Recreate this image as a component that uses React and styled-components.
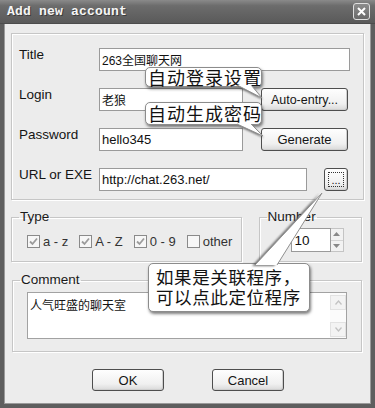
import React from 'react';
import styled, { createGlobalStyle } from 'styled-components';

const GlobalStyle = createGlobalStyle`
  html, body {
    margin: 0;
    padding: 0;
    background: #ececec;
  }
  body {
    font-family: 'Liberation Sans', Arial, 'Noto Sans CJK SC', sans-serif;
    color: #141414;
  }
`;

const Window = styled.div`
  position: relative;
  width: 375px;
  height: 408px;
  display: flex;
  flex-direction: column;
  overflow: hidden;
  background: #ececec;
`;

const TitleBar = styled.div`
  height: 24px;
  flex: none;
  box-sizing: border-box;
  display: flex;
  align-items: center;
  justify-content: space-between;
  padding: 0 5px 0 7px;
  background: linear-gradient(#8a8a8a, #6c6c6c 25%, #616161 70%, #5a5a5a);
  border-bottom: 1px solid #4c4c4c;
`;

const TitleText = styled.span`
  font-family: 'Liberation Mono', 'Courier New', monospace;
  font-weight: bold;
  font-size: 13px;
  letter-spacing: 0.2px;
  color: #f6f6f6;
  text-shadow: 1px 1px 0 #3c3c3c;
`;

const CloseButton = styled.div`
  width: 17px;
  height: 17px;
  box-sizing: border-box;
  border: 1px solid #e0e0e0;
  border-radius: 3px;
  background: linear-gradient(#8c8c8c, #6a6a6a);
  display: flex;
  align-items: center;
  justify-content: center;
`;

const Frame = styled.div`
  flex: 1;
  display: flex;
  flex-direction: column;
  padding: 9px 3px 0;
  border: 4px solid #5e5e5e;
  border-top: none;
  box-shadow: inset 1px 0 0 #9a9a9a, inset -1px 0 0 #9a9a9a, inset 0 -1px 0 #9a9a9a;
`;

const etched = `
  border: 1px solid #c6c6c6;
  box-shadow: inset 1px 1px 0 #fff, 1px 1px 0 #fff;
`;

const TopGroup = styled.div`
  ${etched}
  display: flex;
  flex-direction: column;
  gap: 17px;
  padding: 14px 0 8px 7px;
  margin: 0 4px;
`;

const FieldRow = styled.div`
  display: flex;
  align-items: flex-start;
  height: 23px;
`;

const FieldLabel = styled.label`
  width: 80px;
  flex: none;
  font-size: 13.5px;
  line-height: 16px;
  margin-top: -1px;
`;

const TextInput = styled.input`
  width: ${(p) => p.$w}px;
  height: 23px;
  box-sizing: border-box;
  border: 1px solid #9a9a9a;
  background: #fff;
  padding: 0 2px;
  margin: 0;
  font-family: 'Liberation Sans', Arial, 'Noto Sans CJK SC', sans-serif;
  font-size: ${(p) => (p.$cjk ? 12 : 13)}px;
  color: #111;
  outline: none;
`;

const Button = styled.button`
  width: ${(p) => p.$w}px;
  height: ${(p) => p.$h || 23}px;
  margin-left: ${(p) => p.$ml || 0}px;
  box-sizing: border-box;
  flex: none;
  border: 1px solid #4e4e4e;
  border-radius: 3px;
  background: linear-gradient(#fefefe, #f0f0f0 70%, #d9d9d9);
  box-shadow: inset -1px -1px 0 #cfcfcf;
  font-family: 'Liberation Sans', Arial, sans-serif;
  font-size: ${(p) => p.$fs || 13}px;
  color: #151515;
  padding: 0;
  display: flex;
  align-items: center;
  justify-content: center;
`;

const FocusDots = styled.span`
  width: 16px;
  height: 15px;
  box-sizing: border-box;
  border: 1px dotted #333;
  display: flex;
  align-items: flex-end;
  justify-content: center;
  font-size: 11px;
  line-height: 11px;
`;

const GroupRow = styled.div`
  display: flex;
  gap: 17px;
  margin: 10px 6px 0 4px;
`;

const Group = styled.fieldset`
  ${etched}
  margin: ${(p) => p.$mt || 0}px ${(p) => p.$mr || 0}px 0 ${(p) => p.$ml || 0}px;
  padding: 0;
  min-inline-size: 0;
  width: ${(p) => (p.$w ? `${p.$w}px` : 'auto')};
  box-sizing: border-box;
`;

const Legend = styled.legend`
  margin-left: 7px;
  padding: 0 1px;
  font-size: 13.5px;
  line-height: 14px;
  color: #1a1a1a;
`;

const GroupBody = styled.div`
  display: flex;
  align-items: center;
  gap: ${(p) => p.$gap || 0}px;
  padding: ${(p) => p.$pad};
`;

const CheckItem = styled.label`
  display: flex;
  align-items: center;
  height: 16px;
  font-size: 13px;
  color: #333;
`;

const CheckBox = styled.span`
  width: 13px;
  height: 13px;
  box-sizing: border-box;
  border: 1px solid #8a8a8a;
  background: #f7f7f7;
  margin-right: 3px;
  display: flex;
  align-items: center;
  justify-content: center;
`;

const SpinInput = styled.input`
  width: 40px;
  height: 24px;
  box-sizing: border-box;
  border: 1px solid #9a9a9a;
  background: #fff;
  margin: 0;
  padding: 0 3px;
  font-family: 'Liberation Sans', Arial, sans-serif;
  font-size: 13.5px;
  color: #111;
  outline: none;
`;

const SpinButtons = styled.div`
  width: 13px;
  height: 24px;
  display: flex;
  flex-direction: column;
  box-sizing: border-box;
  border: 1px solid #c4c4c4;
  border-left: none;
  background: #f2f2f2;
`;

const SpinHalf = styled.div`
  flex: 1;
  display: flex;
  align-items: center;
  justify-content: center;
  border-top: ${(p) => (p.$bottom ? '1px solid #d4d4d4' : 'none')};
`;

const CommentBox = styled.div`
  flex: 1;
  height: 47px;
  box-sizing: border-box;
  border: 1px solid #a2a2a2;
  background: #fff;
  display: flex;
`;

const CommentText = styled.div`
  flex: 1;
  padding: 5px 2px;
  font-family: 'Noto Sans CJK SC', sans-serif;
  font-size: 12px;
  line-height: 14px;
`;

const ScrollBar = styled.div`
  width: 16px;
  display: flex;
  flex-direction: column;
  justify-content: space-between;
  padding: 2px 0 1px;
  background: #fbfbfb;
`;

const ScrollArrow = styled.div`
  height: 15px;
  box-sizing: border-box;
  border: 1px solid #e2e2e2;
  background: #f3f3f3;
  display: flex;
  align-items: center;
  justify-content: center;
`;

const ButtonRow = styled.div`
  display: flex;
  justify-content: center;
  gap: 48px;
  margin-top: 17px;
  padding-left: 1px;
`;

const Balloon = styled.div`
  position: absolute;
  left: ${(p) => p.$x}px;
  top: ${(p) => p.$y}px;
  width: ${(p) => p.$w}px;
  height: ${(p) => p.$h}px;
  box-sizing: border-box;
  background: #fff;
  border: 1px solid #8c8c8c;
  border-radius: 5px;
  box-shadow: 1px 2px 3px rgba(0, 0, 0, 0.5);
  padding: ${(p) => p.$pad || '0 0 0 2px'};
  font-family: 'Noto Sans CJK SC', sans-serif;
  font-size: ${(p) => p.$fs}px;
  line-height: ${(p) => p.$lh}px;
  letter-spacing: ${(p) => p.$ls}px;
  color: #121212;
  white-space: nowrap;
  z-index: 2;
`;

const TailLayer = styled.svg`
  position: absolute;
  left: 0;
  top: 0;
  width: 375px;
  height: 408px;
  pointer-events: none;
  z-index: 3;
`;

const Check = () => (
  <svg width="9" height="9" viewBox="0 0 9 9">
    <polyline points="1,4.5 3.5,7 8,1.5" fill="none" stroke="#9c9c9c" strokeWidth="1.8" />
  </svg>
);

const Caret = ({ up, color = '#888' }) => (
  <svg width="7" height="4" viewBox="0 0 7 4">
    <polygon points={up ? '0,4 3.5,0 7,4' : '0,0 3.5,4 7,0'} fill={color} />
  </svg>
);

const Chevron = ({ up }) => (
  <svg width="7" height="5" viewBox="0 0 7 5">
    <polyline points={up ? '0.5,4.5 3.5,1 6.5,4.5' : '0.5,0.5 3.5,4 6.5,0.5'} fill="none" stroke="#c2c2c2" strokeWidth="1.3" />
  </svg>
);

const Tail = ({ base1, base2, tip, shadow }) => (
  <g>
    <polygon points={`${base1[0] + shadow[0]},${base1[1] + shadow[1]} ${base2[0] + shadow[0]},${base2[1] + shadow[1]} ${tip[0] + shadow[0]},${tip[1] + shadow[1]}`} fill="#555" opacity="0.85" filter="url(#blur)" />
    <polygon points={`${base1[0]},${base1[1]} ${base2[0]},${base2[1]} ${tip[0]},${tip[1]}`} fill="#fff" />
    <polyline points={`${base1[0]},${base1[1]} ${tip[0]},${tip[1]} ${base2[0]},${base2[1]}`} fill="none" stroke="#909090" strokeWidth="1" />
  </g>
);

export default function App() {
  return (
    <Window>
      <GlobalStyle />
      <TitleBar>
        <TitleText>Add new account</TitleText>
        <CloseButton>
          <svg width="9" height="9" viewBox="0 0 9 9">
            <path d="M1 1 L8 8 M8 1 L1 8" stroke="#fff" strokeWidth="2" />
          </svg>
        </CloseButton>
      </TitleBar>

      <Frame>
        <TopGroup>
          <FieldRow>
            <FieldLabel>Title</FieldLabel>
            <TextInput $w={251} $cjk readOnly value="263全国聊天网" />
          </FieldRow>
          <FieldRow>
            <FieldLabel>Login</FieldLabel>
            <TextInput $w={144} $cjk readOnly value="老狼" />
            <Button $w={87} $ml={18} $fs={12.5}>Auto-entry...</Button>
          </FieldRow>
          <FieldRow>
            <FieldLabel>Password</FieldLabel>
            <TextInput $w={144} readOnly value="hello345" />
            <Button $w={87} $ml={18}>Generate</Button>
          </FieldRow>
          <FieldRow>
            <FieldLabel>URL or EXE</FieldLabel>
            <TextInput $w={208} readOnly value="http://chat.263.net/" />
            <Button $w={24} $ml={17}>
              <FocusDots>...</FocusDots>
            </Button>
          </FieldRow>
        </TopGroup>

        <GroupRow>
          <Group $w={232}>
            <Legend>Type</Legend>
            <GroupBody $pad="9px 0 12px 15px" $gap={11}>
              <CheckItem><CheckBox><Check /></CheckBox>a - z</CheckItem>
              <CheckItem><CheckBox><Check /></CheckBox>A - Z</CheckItem>
              <CheckItem><CheckBox><Check /></CheckBox>0 - 9</CheckItem>
              <CheckItem><CheckBox />other</CheckItem>
            </GroupBody>
          </Group>
          <Group $w={104}>
            <Legend>Number</Legend>
            <GroupBody $pad="4px 0 9px 31px">
              <SpinInput readOnly value="10" />
              <SpinButtons>
                <SpinHalf><Caret up /></SpinHalf>
                <SpinHalf $bottom><Caret /></SpinHalf>
              </SpinButtons>
            </GroupBody>
          </Group>
        </GroupRow>

        <Group $mt={11} $ml={5} $mr={6}>
          <Legend>Comment</Legend>
          <GroupBody $pad="5px 14px 12px 14px">
            <CommentBox>
              <CommentText>人气旺盛的聊天室</CommentText>
              <ScrollBar>
                <ScrollArrow><Chevron up /></ScrollArrow>
                <ScrollArrow><Chevron /></ScrollArrow>
              </ScrollBar>
            </CommentBox>
          </GroupBody>
        </Group>

        <ButtonRow>
          <Button $w={72} $h={22}>OK</Button>
          <Button $w={72} $h={22}>Cancel</Button>
        </ButtonRow>
      </Frame>

      <Balloon $x={145} $y={67} $w={117} $h={20} $fs={18} $lh={18} $ls={1}>自动登录设置</Balloon>
      <Balloon $x={145} $y={102} $w={117} $h={23} $fs={18} $lh={21} $ls={1}>自动生成密码</Balloon>
      <Balloon $x={148} $y={263} $w={162} $h={49} $fs={17.5} $lh={20} $ls={0.6} $pad="3px 0 0 7px">
        如果是关联程序，
        <br />
        可以点此定位程序
      </Balloon>

      <TailLayer viewBox="0 0 375 408">
        <defs>
          <filter id="blur" x="-50%" y="-50%" width="200%" height="200%">
            <feGaussianBlur stdDeviation="1.2" />
          </filter>
        </defs>
        <Tail base1={[237, 85]} base2={[251, 85]} tip={[262, 98]} shadow={[1, 2]} />
        <Tail base1={[237, 124]} base2={[251, 124]} tip={[263, 136]} shadow={[1, 2]} />
        <Tail base1={[255, 265]} base2={[277, 265]} tip={[322, 193]} shadow={[-3, 1]} />
      </TailLayer>
    </Window>
  );
}
